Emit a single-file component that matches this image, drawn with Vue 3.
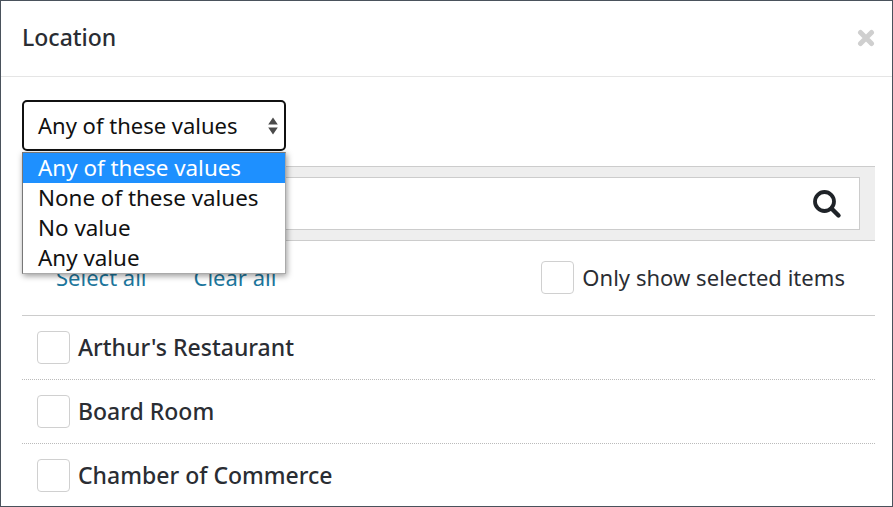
<template>
  <div class="modal">
    <div class="modal-header">
      <h2>Location</h2>
      <svg class="close" width="18" height="18" viewBox="0 0 18 18">
        <path d="M3.5 3.5 L14.5 14.5 M14.5 3.5 L3.5 14.5" stroke="#cfcfcf" stroke-width="5" stroke-linecap="round" />
      </svg>
    </div>
    <div class="modal-body">
      <div class="select-wrap">
        <div class="select-box">
          <span>{{ options[0] }}</span>
          <svg class="arrows" width="10" height="18" viewBox="0 0 10 18">
            <path d="M5 0.5 L9.8 7.5 H0.2 Z M5 17.5 L9.8 10.5 H0.2 Z" fill="#4a4a4a" />
          </svg>
        </div>
        <ul class="dropdown">
          <li v-for="(opt, i) in options" :key="opt" :class="{ active: i === 0 }">{{ opt }}</li>
        </ul>
      </div>
      <div class="search-bar">
        <div class="search-input">
          <svg width="30" height="30" viewBox="0 0 30 30">
            <circle cx="12.5" cy="12.5" r="9.5" fill="none" stroke="#1f2328" stroke-width="3.8" />
            <path d="M19.5 19.5 L26.5 26.5" stroke="#1f2328" stroke-width="4.4" stroke-linecap="round" />
          </svg>
        </div>
      </div>
      <div class="actions">
        <div class="links">
          <a>Select all</a>
          <a>Clear all</a>
        </div>
        <label class="only-selected">
          <span class="check"></span>
          Only show selected items
        </label>
      </div>
      <div class="list">
        <div class="row" v-for="item in items" :key="item">
          <span class="check"></span>
          <span class="name">{{ item }}</span>
        </div>
      </div>
    </div>
  </div>
</template>

<script setup>
const options = ['Any of these values', 'None of these values', 'No value', 'Any value'];
const items = ["Arthur's Restaurant", 'Board Room', 'Chamber of Commerce'];
</script>

<style>
html, body {
  margin: 0;
  background: #fff;
}
</style>

<style scoped>
.modal {
  box-sizing: border-box;
  width: 893px;
  height: 507px;
  border: 1px solid #4a525c;
  overflow: hidden;
  background: #fff;
  color: #222;
  font-family: "Noto Sans", sans-serif;
  font-size: 22px;
}

.modal-header {
  box-sizing: border-box;
  height: 76px;
  display: flex;
  align-items: center;
  justify-content: space-between;
  padding: 0 17px 0 21px;
  border-bottom: 1px solid #e5e5e5;
}

h2 {
  margin: 0 0 4px;
  font-size: 23px;
  font-weight: 500;
  color: #2a2d33;
}

.close {
  margin-bottom: 1px;
}

.modal-body {
  padding: 23px 17px 0 21px;
}

.select-wrap {
  position: relative;
  width: 264px;
  height: 66px;
}

.select-box {
  box-sizing: border-box;
  height: 51px;
  border: 2px solid #111;
  border-radius: 5px;
  display: flex;
  align-items: center;
  justify-content: space-between;
  padding: 0 6px 0 14px;
  color: #111;
}

.select-box span {
  margin-bottom: 2px;
}

.dropdown {
  position: absolute;
  z-index: 2;
  top: 52px;
  left: 0;
  width: 264px;
  box-sizing: border-box;
  margin: 0;
  padding: 0;
  list-style: none;
  background: #fff;
  border: 1px solid #777;
  border-bottom-color: #aaa;
  border-right-color: #aaa;
  box-shadow: 1px 2px 6px rgba(0, 0, 0, 0.4);
  color: #111;
  font-size: 22.4px;
}

.dropdown li {
  height: 30px;
  line-height: 29px;
  padding-left: 15px;
}

.dropdown li.active {
  background: #1e90ff;
  color: #fff;
}

.search-bar {
  box-sizing: border-box;
  height: 75px;
  padding: 10px 15px;
  background: #eee;
  border-top: 1px solid #ccc;
  border-bottom: 1px solid #ccc;
}

.search-input {
  box-sizing: border-box;
  height: 53px;
  background: #fff;
  border: 1px solid #ccc;
  display: flex;
  align-items: center;
  justify-content: flex-end;
  padding-right: 17px;
}

.actions {
  box-sizing: border-box;
  height: 75px;
  display: flex;
  align-items: center;
  justify-content: space-between;
  padding: 0 30px 2px 34px;
  border-bottom: 1px solid #ccc;
}

.links {
  display: flex;
  gap: 47px;
}

.links a {
  color: #1c769c;
}

.only-selected {
  display: flex;
  align-items: center;
  gap: 8px;
  color: #2a2d33;
  letter-spacing: 0.04px;
}

.check {
  box-sizing: border-box;
  flex: none;
  width: 33px;
  height: 33px;
  background: #fff;
  border: 1px solid #d0d0d0;
  border-radius: 4px;
}

.row {
  box-sizing: border-box;
  height: 64px;
  display: flex;
  align-items: center;
  gap: 8px;
  padding-left: 15px;
  border-bottom: 1px dotted #bbb;
}

.name {
  font-size: 23px;
  font-weight: 500;
  margin-bottom: 1px;
  color: #2a2d33;
}
</style>
